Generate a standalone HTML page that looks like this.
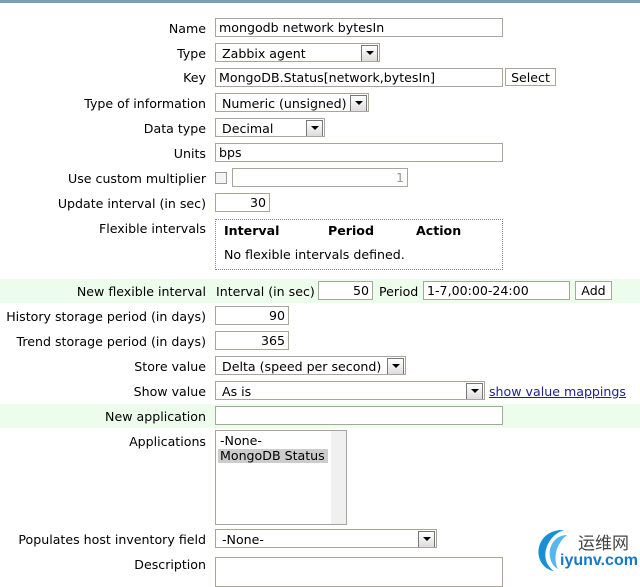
<!DOCTYPE html>
<html><head><meta charset="utf-8"><style>
*{box-sizing:border-box}
body{margin:0;width:640px;height:576px;background:#fff;position:relative;overflow:hidden;font-family:"DejaVu Sans",Verdana,sans-serif;font-size:12.6px;color:#000}
.top{position:absolute;left:0;top:0;width:640px;height:3px;background:#7f9db9}
.g{position:absolute;left:0;width:640px;background:#ecfdeb}
.l{position:absolute;right:434px;white-space:nowrap;line-height:14px;margin-top:1px}
.i{position:absolute;height:19px;border:1px solid #a9a698;background:#fff;padding:0 3px;line-height:18px;white-space:nowrap;overflow:hidden}
.r{text-align:right}
.s{position:absolute;height:19px;border:1px solid #a9a698;background:#fff;padding:0 0 0 6px;line-height:20px;white-space:nowrap;overflow:hidden}
.s:after{content:"";position:absolute;right:1px;top:1px;width:15px;height:15px;border:1px solid #777;background:#eee linear-gradient(#fff,#ddd)}
.s b{position:absolute;right:5px;top:7px;width:0;height:0;border-left:4px solid transparent;border-right:4px solid transparent;border-top:4px solid #000;z-index:2}
.t{position:absolute;white-space:nowrap;line-height:14px;margin-top:1px}
.btn{position:absolute;height:18px;border:1px solid #a9a698;background:#fff;text-align:center;line-height:17px}
</style></head><body>
<div class="top"></div>
<div class="g" style="top:279px;height:24px"></div>
<div class="g" style="top:404px;height:24px"></div>

<div class="l" style="top:21px">Name</div><div class="i" style="left:215px;top:18px;width:288px">mongodb network bytesIn</div>
<div class="l" style="top:46px">Type</div><div class="s" style="left:215px;top:43px;width:165px">Zabbix agent<b></b></div>
<div class="l" style="top:70px">Key</div><div class="i" style="left:215px;top:68px;width:288px">MongoDB.Status[network,bytesIn]</div><div class="btn" style="left:505px;top:68px;width:51px">Select</div>
<div class="l" style="top:96px">Type of information</div><div class="s" style="left:215px;top:93px;width:154px">Numeric (unsigned)<b></b></div>
<div class="l" style="top:121px">Data type</div><div class="s" style="left:215px;top:118px;width:110px">Decimal<b></b></div>
<div class="l" style="top:146px">Units</div><div class="i" style="left:215px;top:143px;width:288px">bps</div>
<div class="l" style="top:171px">Use custom multiplier</div>
<div style="position:absolute;left:215px;top:172px;width:12px;height:12px;border:1px solid #999;background:#f4f4f4"></div>
<div class="i r" style="left:232px;top:168px;width:176px;color:#999">1</div>
<div class="l" style="top:196px">Update interval (in sec)</div><div class="i r" style="left:215px;top:193px;width:55px">30</div>
<div class="l" style="top:221px">Flexible intervals</div>
<div style="position:absolute;left:215px;top:219px;width:288px;height:51px;border:1px dotted #7f7fa8"></div>
<div class="t" style="left:224px;top:223px;font-weight:bold">Interval</div>
<div class="t" style="left:328px;top:223px;font-weight:bold">Period</div>
<div class="t" style="left:416px;top:223px;font-weight:bold">Action</div>
<div class="t" style="left:224px;top:247px">No flexible intervals defined.</div>

<div class="l" style="top:284px">New flexible interval</div>
<div class="t" style="left:216px;top:284px">Interval (in sec)</div>
<div class="i r" style="left:318px;top:281px;width:55px">50</div>
<div class="t" style="left:379px;top:284px">Period</div>
<div class="i" style="left:423px;top:281px;width:147px">1-7,00:00-24:00</div>
<div class="btn" style="left:575px;top:281px;width:37px;height:19px;line-height:17px">Add</div>

<div class="l" style="top:309px">History storage period (in days)</div><div class="i r" style="left:215px;top:306px;width:74px">90</div>
<div class="l" style="top:334px">Trend storage period (in days)</div><div class="i r" style="left:215px;top:331px;width:74px">365</div>
<div class="l" style="top:359px">Store value</div><div class="s" style="left:215px;top:356px;width:191px">Delta (speed per second)<b></b></div>
<div class="l" style="top:384px">Show value</div><div class="s" style="left:215px;top:381px;width:270px">As is<b></b></div>
<div class="t" style="left:489px;top:384px;color:#1f1f8f;text-decoration:underline">show value mappings</div>
<div class="l" style="top:409px">New application</div><div class="i" style="left:215px;top:406px;width:288px"></div>
<div class="l" style="top:434px">Applications</div>
<div style="position:absolute;left:215px;top:430px;width:132px;height:95px;border:1px solid #a9a698;background:#fff">
<div style="position:absolute;right:0;top:0;width:15px;height:93px;background:#f0f0f0"></div>
<div class="t" style="left:4px;top:2px">-None-</div>
<div class="t" style="left:2px;top:17px;background:#ccc;padding:0 2px;width:110px">MongoDB Status</div>
</div>
<div class="l" style="top:532px">Populates host inventory field</div><div class="s" style="left:215px;top:529px;width:222px">-None-<b></b></div>
<div class="l" style="top:557px">Description</div><div class="i" style="left:215px;top:557px;width:288px;height:30px"></div>

<svg style="position:absolute;left:534px;top:527px" width="40" height="46" viewBox="0 0 40 46">
<path d="M30 3 C12 2 2 16 5 30 C7 38 13 43 20 44 C11 38 9 27 14 17 C18 9 24 5 30 3Z" fill="#1a8fd8"/>
<path d="M33 8 C22 8 14 18 16 30 C17 36 20 40 24 42 C20 34 21 23 26 16 C28 12 31 10 33 8Z" fill="#55b7ee"/>
</svg>
<div class="t" style="left:578px;top:531px;font-family:'Noto Sans CJK SC',sans-serif;font-size:17px;line-height:20px;color:#444">运维网</div>
<div class="t" style="left:560px;top:551px;font-family:'Liberation Sans',sans-serif;font-weight:bold;font-size:16px;line-height:18px;color:#1679c8">iyunv.com</div>
</body></html>
